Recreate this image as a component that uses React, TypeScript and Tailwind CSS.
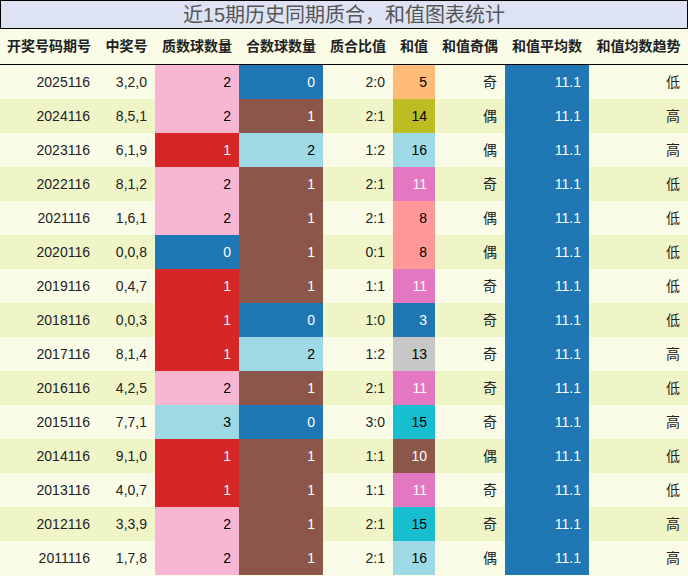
const rows: [string, string, number, number, number][] = [
  ['2025116', '3,2,0', 2, 0, 5],
  ['2024116', '8,5,1', 2, 1, 14],
  ['2023116', '6,1,9', 1, 2, 16],
  ['2022116', '8,1,2', 2, 1, 11],
  ['2021116', '1,6,1', 2, 1, 8],
  ['2020116', '0,0,8', 0, 1, 8],
  ['2019116', '0,4,7', 1, 1, 11],
  ['2018116', '0,0,3', 1, 0, 3],
  ['2017116', '8,1,4', 1, 2, 13],
  ['2016116', '4,2,5', 2, 1, 11],
  ['2015116', '7,7,1', 3, 0, 15],
  ['2014116', '9,1,0', 1, 1, 10],
  ['2013116', '4,0,7', 1, 1, 11],
  ['2012116', '3,3,9', 2, 1, 15],
  ['2011116', '1,7,8', 2, 1, 16],
];

const countCell: Record<number, string> = {
  0: 'bg-[#1f77b4] text-white',
  1: 'bg-[#d62728] text-white',
  2: 'bg-[#f7b6d2] text-black',
  3: 'bg-[#9edae5] text-black',
};
const compCell: Record<number, string> = {
  0: 'bg-[#1f77b4] text-white',
  1: 'bg-[#8c564b] text-white',
  2: 'bg-[#9edae5] text-black',
};
const sumCell: Record<number, string> = {
  3: 'bg-[#1f77b4] text-white',
  5: 'bg-[#ffbb78] text-black',
  8: 'bg-[#ff9896] text-black',
  10: 'bg-[#8c564b] text-white',
  11: 'bg-[#e377c2] text-white',
  13: 'bg-[#c7c7c7] text-black',
  14: 'bg-[#bcbd22] text-black',
  15: 'bg-[#17becf] text-black',
  16: 'bg-[#9edae5] text-black',
};

const cols = 'grid grid-cols-[98px_57px_84px_84px_70px_42px_70px_84px_99px]';
const heads = ['开奖号码期号', '中奖号', '质数球数量', '合数球数量', '质合比值', '和值', '和值奇偶', '和值平均数', '和值均数趋势'];

export default function App() {
  return (
    <div className="w-[688px] h-[576px] overflow-hidden bg-[#fafce8] text-[14px] text-[#222]" style={{ fontFamily: '"Liberation Sans", "Noto Sans CJK SC", sans-serif' }}>
      <div className="h-[29px] border border-black bg-[#dde3f3] flex items-center justify-center text-[20px] text-[#555]">
        近15期历史同期质合，和值图表统计
      </div>
      <div className={`${cols} h-[36px] border-b border-black font-bold`}>
        {heads.map(h => (
          <div key={h} className="flex items-center justify-center whitespace-nowrap">{h}</div>
        ))}
      </div>
      {rows.map(([id, nums, p, c, s], i) => {
        const band = i % 2 === 0 ? 'bg-[#fafce8]' : 'bg-[#f0f5c8]';
        const cell = 'flex items-center justify-end pr-2';
        return (
          <div key={id} className={`${cols} h-[34px] ${band}`}>
            <div className={cell}>{id}</div>
            <div className={cell}>{nums}</div>
            <div className={`${cell} ${countCell[p]}`}>{p}</div>
            <div className={`${cell} ${compCell[c]}`}>{c}</div>
            <div className={cell}>{p}:{c}</div>
            <div className={`${cell} ${sumCell[s]}`}>{s}</div>
            <div className={cell}>{s % 2 ? '奇' : '偶'}</div>
            <div className={`${cell} bg-[#1f77b4] text-white`}>11.1</div>
            <div className={cell}>{s > 11.1 ? '高' : '低'}</div>
          </div>
        );
      })}
    </div>
  );
}
